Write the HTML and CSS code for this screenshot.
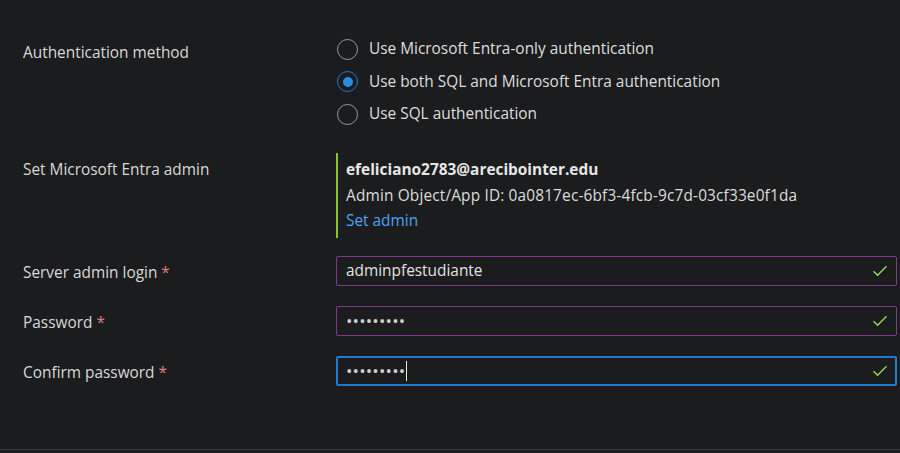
FILE: index.html
```html
<!DOCTYPE html>
<html lang="en">
<head>
<meta charset="utf-8">
<title>Authentication</title>
<link rel="stylesheet" href="styles.css">
</head>
<body>
<div class="page">
  <div class="form">
    <div class="row row-auth">
      <div class="label label-auth">Authentication method</div>
      <div class="control radios">
        <div class="radio"><span class="circle"></span><span class="radio-text">Use Microsoft Entra-only authentication</span></div>
        <div class="radio checked"><span class="circle"><span class="dot"></span></span><span class="radio-text">Use both SQL and Microsoft Entra authentication</span></div>
        <div class="radio"><span class="circle"></span><span class="radio-text">Use SQL authentication</span></div>
      </div>
    </div>
    <div class="row row-entra">
      <div class="label label-entra">Set Microsoft Entra admin</div>
      <div class="control entra">
        <div class="entra-line entra-email">efeliciano2783@arecibointer.edu</div>
        <div class="entra-line entra-id">Admin Object/App ID: 0a0817ec-6bf3-4fcb-9c7d-03cf33e0f1da</div>
        <div class="entra-line entra-link">Set admin</div>
      </div>
    </div>
    <div class="row row-input first">
      <div class="label label-input">Server admin login <span class="req">*</span></div>
      <div class="control">
        <div class="input">
          <span class="input-text">adminpfestudiante</span>
          <svg class="check" width="16" height="12" viewBox="0 0 16 12"><path d="M1.5 6.2 L5.6 10.2 L14.5 1.3" fill="none" stroke="#9bd65a" stroke-width="1.4"/></svg>
        </div>
      </div>
    </div>
    <div class="row row-input">
      <div class="label label-input">Password <span class="req">*</span></div>
      <div class="control">
        <div class="input">
          <span class="input-text dots">•••••••••</span>
          <svg class="check" width="16" height="12" viewBox="0 0 16 12"><path d="M1.5 6.2 L5.6 10.2 L14.5 1.3" fill="none" stroke="#9bd65a" stroke-width="1.4"/></svg>
        </div>
      </div>
    </div>
    <div class="row row-input">
      <div class="label label-input">Confirm password <span class="req">*</span></div>
      <div class="control">
        <div class="input focused">
          <span class="input-text dots">•••••••••</span><span class="caret"></span>
          <svg class="check" width="16" height="12" viewBox="0 0 16 12"><path d="M1.5 6.2 L5.6 10.2 L14.5 1.3" fill="none" stroke="#9bd65a" stroke-width="1.4"/></svg>
        </div>
      </div>
    </div>
  </div>
  <div class="footer"></div>
</div>
</body>
</html>
```

FILE: styles.css
```css
html, body {
  margin: 0;
  padding: 0;
  background: #1b1c1e;
}
body {
  font-family: "Open Sans", "Noto Sans", "Liberation Sans", sans-serif;
  font-size: 15.4px;
  color: #dcdcdc;
}
.page {
  height: 453px;
  display: flex;
  flex-direction: column;
  overflow: hidden;
}
.form {
  padding: 38px 3px 0 23px;
}
.row {
  display: grid;
  grid-template-columns: 313px 1fr;
}
.label {
  line-height: 22px;
  color: #d8d8d8;
}
.label-auth {
  padding-top: 4px;
}
.radios {
  display: flex;
  flex-direction: column;
  gap: 10.5px;
}
.radio {
  display: flex;
  align-items: center;
  height: 22px;
  gap: 11px;
  margin-left: 1px;
}
.circle {
  width: 21px;
  height: 21px;
  box-sizing: border-box;
  border: 1px solid #9a9a9a;
  border-radius: 50%;
  display: flex;
  align-items: center;
  justify-content: center;
  flex: none;
}
.checked .circle {
  border-color: #1f79c9;
}
.dot {
  width: 10px;
  height: 10px;
  border-radius: 50%;
  background: #2a8be0;
}
.radio-text {
  line-height: 22px;
  color: #dedede;
}
.row-entra {
  margin-top: 28px;
}
.label-entra {
  padding-top: 6px;
}
.entra {
  border-left: 2px solid #86c232;
  padding: 4px 0 4px 8px;
}
.entra-line {
  line-height: 25.5px;
}
.entra-email {
  font-weight: 700;
  color: #e6e6e6;
}
.entra-id {
  letter-spacing: 0.16px;
}
.entra-link {
  color: #4ba3f3;
}
.row-input {
  margin-top: 20px;
}
.row-input.first {
  margin-top: 18px;
}
.label-input {
  padding-top: 6px;
}
.req {
  color: #e27c84;
}
.input {
  height: 30px;
  box-sizing: border-box;
  border: 1px solid #7f3a90;
  border-radius: 2px;
  display: flex;
  align-items: center;
  padding: 0 8px 0 9px;
}
.input.focused {
  border: 2px solid #1f7ad0;
  padding-left: 8px;
  padding-right: 7px;
}
.input-text {
  color: #e2e2e2;
  line-height: 20px;
}
.dots {
  font-size: 17px;
  letter-spacing: 0.2px;
  color: #d0d0d0;
}
.caret {
  width: 1px;
  height: 20px;
  background: #e8e8e8;
  margin-left: 1px;
}
.check {
  margin-left: auto;
}
.footer {
  margin-top: auto;
  height: 3px;
  border-top: 1px solid #3a3b3d;
  background: #1c1d1f;
}
```
